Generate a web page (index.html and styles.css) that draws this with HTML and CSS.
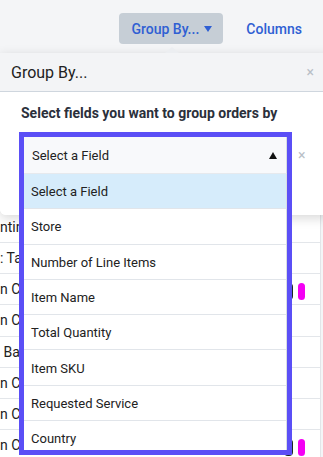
FILE: index.html
```html
<!DOCTYPE html>
<html>
<head>
<meta charset="utf-8">
<link rel="stylesheet" href="styles.css">
</head>
<body>
<div class="page">
  <div class="toolbar">
    <button class="groupby-btn"><span>Group By...</span><span class="tri-down"></span></button>
    <button class="columns-btn">Columns</button>
  </div>
  <div class="table">
    <div class="table-head"></div>
    <div class="row"><span class="cell">nting</span></div>
    <div class="row"><span class="cell">: Tag</span></div>
    <div class="row"><span class="cell">n Cart</span><span class="pills"><span class="pill dark"></span><span class="pill pink"></span></span></div>
    <div class="row"><span class="cell">n Cart</span></div>
    <div class="row"><span class="cell">&nbsp;Baby</span></div>
    <div class="row"><span class="cell">n Cart</span></div>
    <div class="row"><span class="cell">n Cart</span></div>
    <div class="row"><span class="cell">n Cart</span><span class="pills"><span class="pill dark"></span><span class="pill pink"></span></span></div>
  </div>

  <div class="popover">
    <div class="popover-arrow"></div>
    <div class="popover-header">
      <span class="popover-title">Group By...</span>
      <span class="close">×</span>
    </div>
    <div class="popover-body">
      <div class="heading">Select fields you want to group orders by</div>
      <div class="picker-row">
        <div class="picker">
          <div class="select">
            <span>Select a Field</span>
            <span class="tri-up"></span>
          </div>
          <div class="options">
            <div class="option active">Select a Field</div>
            <div class="option">Store</div>
            <div class="option">Number of Line Items</div>
            <div class="option">Item Name</div>
            <div class="option">Total Quantity</div>
            <div class="option">Item SKU</div>
            <div class="option">Requested Service</div>
            <div class="option">Country</div>
          </div>
        </div>
        <span class="close small">×</span>
      </div>
    </div>
  </div>
</div>
</body>
</html>
```

FILE: styles.css
```css
* { box-sizing: border-box; }
html, body {
  margin: 0;
  padding: 0;
  background: #f4f5f7;
  font-family: Roboto, "Liberation Sans", Arial, sans-serif;
  color: #222;
  font-size: 14px;
}
.page {
  position: relative;
  width: 323px;
  height: 457px;
  overflow: hidden;
}
.toolbar {
  height: 53px;
  display: flex;
  justify-content: flex-end;
  align-items: flex-start;
  padding: 13px 21px 0 0;
  gap: 23px;
}
button {
  font-family: inherit;
  border: none;
  margin: 0;
  cursor: pointer;
}
.groupby-btn {
  width: 104px;
  height: 31px;
  background: #c6ced6;
  border-radius: 4px;
  color: #2f5fd3;
  font-size: 14px;
  font-weight: 500;
  display: flex;
  align-items: center;
  justify-content: center;
  gap: 5px;
  padding: 0 0 0 1px;
}
.tri-down {
  width: 0;
  height: 0;
  border-left: 4.5px solid transparent;
  border-right: 4.5px solid transparent;
  border-top: 6px solid #2f5fd3;
  margin-top: 1px;
}
.columns-btn {
  height: 31px;
  background: transparent;
  color: #2f5fd3;
  font-size: 14px;
  font-weight: 500;
  padding: 0;
}
.table {
  width: 321px;
  background: #fff;
  border-right: 1px solid #e2e5e9;
}
.table-head {
  height: 158.8px;
}
.row {
  height: 31.2px;
  border-bottom: 1px solid #e3e6ea;
  display: flex;
  align-items: center;
  justify-content: space-between;
  white-space: nowrap;
}
.cell {
  font-size: 14px;
  color: #222;
}
.pills {
  display: flex;
  gap: 5px;
  margin-right: 15px;
  margin-top: 4px;
}
.pill {
  display: block;
  height: 17px;
  border-radius: 4px;
}
.pill.dark { width: 9px; background: #1d271f; }
.pill.pink { width: 7px; background: #f400f4; border-radius: 3.5px; }

.popover {
  position: absolute;
  top: 53px;
  left: 0;
  width: 330px;
  z-index: 5;
  box-shadow: 0 3px 12px rgba(0, 0, 0, 0.16);
  border-radius: 0 0 6px 6px;
}
.popover-arrow {
  position: absolute;
  top: -6px;
  left: 165px;
  width: 0;
  height: 0;
  border-left: 7px solid transparent;
  border-right: 7px solid transparent;
  border-bottom: 6px solid #eceef1;
}
.popover-header {
  height: 39px;
  background: #f3f4f6;
  border-bottom: 1px solid #cfd6de;
  display: flex;
  align-items: center;
  justify-content: space-between;
  padding: 0 16px 0 11px;
}
.popover-title {
  font-size: 16px;
  color: #222;
}
.close {
  color: #b9bfc7;
  font-size: 14px;
  line-height: 1;
}
.popover-body {
  height: 123px;
  background: #fff;
  border-radius: 0 0 6px 6px;
  padding: 11px 0 0 19px;
}
.heading {
  font-weight: 700;
  font-size: 14px;
  line-height: 20px;
  color: #2b303b;
  padding-left: 2px;
  margin-bottom: 9px;
}
.picker-row {
  display: flex;
  align-items: flex-start;
}
.picker {
  width: 273px;
  height: 323px;
  border: 5px solid #5b4ff6;
  background: #fff;
  overflow: hidden;
}
.select {
  height: 36px;
  background: #f8f9fb;
  border-right: 1px solid #d9dde2;
  display: flex;
  align-items: center;
  justify-content: space-between;
  padding: 0 9px 0 8px;
  font-size: 13px;
  color: #222;
}
.tri-up {
  width: 0;
  height: 0;
  border-left: 4.5px solid transparent;
  border-right: 4.5px solid transparent;
  border-bottom: 7px solid #111;
}
.options {
  border-top: 1px solid #e6e9ed;
  border-right: 1px solid #d9dde2;
}
.option {
  height: 35.3px;
  border-bottom: 1px solid #e1e5ea;
  display: flex;
  align-items: center;
  padding: 1px 0 0 7px;
  font-size: 13px;
  color: #222;
}
.option.active {
  background: #d6ecfb;
}
.close.small {
  margin: 16px 0 0 6px;
}
```
